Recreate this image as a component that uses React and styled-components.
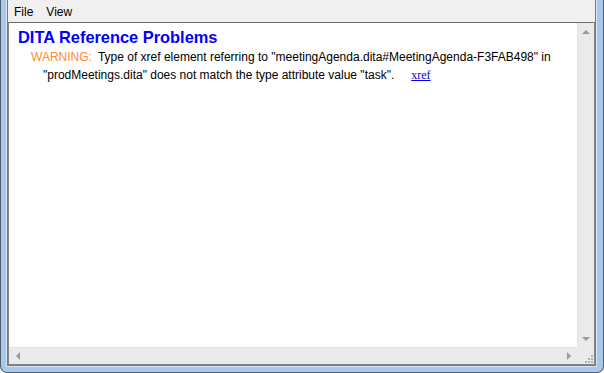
import React from 'react'
import styled, { createGlobalStyle } from 'styled-components'

const Global = createGlobalStyle`
  html, body { margin: 0; padding: 0; background: #ffffff; }
  body { width: 604px; height: 373px; overflow: hidden; }
`

const Frame = styled.div`
  box-sizing: border-box;
  width: 604px;
  height: 373px;
  display: flex;
  flex-direction: column;
  background: #a9c9ec;
  border: 1px solid #4f5d6c;
  border-top: none;
  border-radius: 0 0 7px 7px;
  padding: 0 7px 6px 6px;
`

const Client = styled.div`
  flex: 1;
  display: flex;
  flex-direction: column;
  background: #f0f0f0;
  border: 1px solid #6e7c8a;
  border-top: none;
  box-shadow: 0 0 0 1px #dce7f3;
  min-height: 0;
`

const MenuBar = styled.div`
  height: 22px;
  box-sizing: border-box;
  padding: 2px 0 0 0;
  display: flex;
  align-items: center;
  background: #f0f0f0;
  font-family: "Liberation Sans", Arial, sans-serif;
  font-size: 12px;
  color: #000;
`

const MenuItem = styled.span`
  padding: 0 7px 0 6px;
`

const Panel = styled.div`
  flex: 1;
  display: grid;
  grid-template-columns: 1fr 17px;
  grid-template-rows: 1fr 17px;
  border: 1px solid #828790;
  border-top-color: #6d6d6d;
  background: #fff;
  min-height: 0;
`

const Content = styled.div`
  padding: 4px 8px;
  font-family: "Liberation Sans", Arial, sans-serif;
  overflow: hidden;
`

const Title = styled.h1`
  margin: 0 0 1px 1px;
  font-size: 16.4px;
  line-height: 20px;
  font-weight: bold;
  color: #0000ff;
`

const Message = styled.div`
  padding-left: 26px;
  text-indent: -12px;
  font-size: 12px;
  line-height: 18px;
  color: #000;
`

const Level = styled.span`
  color: #ff8c28;
  margin-right: 6px;
`

const XrefLink = styled.a`
  font-family: "Liberation Serif", "Times New Roman", serif;
  font-size: 12px;
  color: #0000ee;
  text-decoration: underline;
  margin-left: 17px;
`

const ScrollBar = styled.div`
  background: #eaeaea;
  display: flex;
  flex-direction: ${p => (p.$vertical ? 'column' : 'row')};
  justify-content: space-between;
  align-items: center;
  border-${p => (p.$vertical ? 'left' : 'top')}: 1px solid #e3e3e3;
`

const Arrow = styled.div`
  width: 17px;
  height: 17px;
  display: flex;
  align-items: center;
  justify-content: center;
`

const Grip = styled.div`
  background: #eaeaea;
  display: flex;
  align-items: flex-end;
  justify-content: flex-end;
`

function Tri({ dir }) {
  const pts = {
    up: '4,7 8,3 12,7',
    down: '4,3 8,7 12,3',
    left: '6,4 2,8 6,12',
    right: '2,4 6,8 2,12'
  }[dir]
  const vertical = dir === 'up' || dir === 'down'
  return (
    <svg width={vertical ? 16 : 8} height={vertical ? 10 : 16} viewBox={vertical ? '0 0 16 10' : '0 0 8 16'}>
      <polygon points={pts} fill="#9a9a9a" />
    </svg>
  )
}

export default function App() {
  return (
    <>
      <Global />
      <Frame>
        <Client>
          <MenuBar>
            <MenuItem>File</MenuItem>
            <MenuItem>View</MenuItem>
          </MenuBar>
          <Panel>
            <Content>
              <Title>DITA Reference Problems</Title>
              <Message>
                <Level>WARNING:</Level>
                Type of xref element referring to "meetingAgenda.dita#MeetingAgenda-F3FAB498" in
                "prodMeetings.dita" does not match the type attribute value "task".
                <XrefLink href="#">xref</XrefLink>
              </Message>
            </Content>
            <ScrollBar $vertical>
              <Arrow><Tri dir="up" /></Arrow>
              <Arrow><Tri dir="down" /></Arrow>
            </ScrollBar>
            <ScrollBar>
              <Arrow><Tri dir="left" /></Arrow>
              <Arrow><Tri dir="right" /></Arrow>
            </ScrollBar>
            <Grip>
              <svg width="12" height="12" viewBox="0 0 12 12">
                {[[9, 3], [6, 6], [9, 6], [3, 9], [6, 9], [9, 9]].map(([x, y]) => (
                  <rect key={x + '-' + y} x={x} y={y} width="2" height="2" fill="#b0b0b0" />
                ))}
              </svg>
            </Grip>
          </Panel>
        </Client>
      </Frame>
    </>
  )
}
